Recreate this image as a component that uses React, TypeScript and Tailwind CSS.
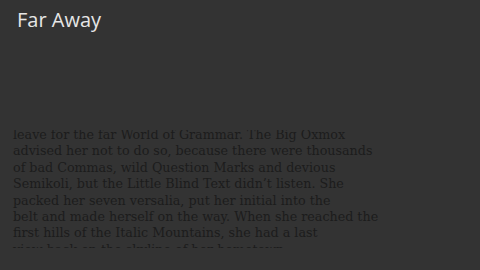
const lines = [
  "leave for the far World of Grammar. The Big Oxmox",
  "advised her not to do so, because there were thousands",
  "of bad Commas, wild Question Marks and devious",
  "Semikoli, but the Little Blind Text didn\u2019t listen. She",
  "packed her seven versalia, put her initial into the",
  "belt and made herself on the way. When she reached the",
  "first hills of the Italic Mountains, she had a last",
  "view back on the skyline of her hometown",
];

export default function App() {
  return (
    <div className="w-[480px] h-[270px] bg-[#333333] overflow-hidden flex flex-col">
      <header className="h-[130px] px-[17px] pt-[6px]">
        <h1 className="text-[20px] leading-[28px] text-[#e6e6e6] font-['Open_Sans',sans-serif]">Far Away</h1>
      </header>
      <section className="h-[118px] overflow-hidden px-[13px]">
        <div className="-mt-[3px] text-[12.7px] leading-[16.4px] text-[#1c1c1c] font-['DejaVu_Serif',serif] whitespace-nowrap">
          {lines.map((l) => (
            <p key={l}>{l}</p>
          ))}
        </div>
      </section>
    </div>
  );
}
